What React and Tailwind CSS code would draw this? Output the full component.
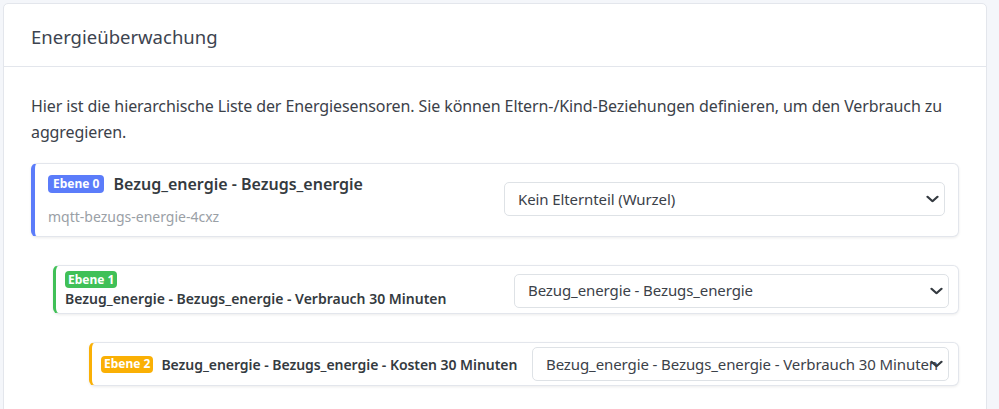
import React from "react";

const sensors = [
  {
    level: 0,
    name: "Bezug_energie - Bezugs_energie",
    id: "mqtt-bezugs-energie-4cxz",
    parent: "Kein Elternteil (Wurzel)",
  },
  {
    level: 1,
    name: "Bezug_energie - Bezugs_energie - Verbrauch 30 Minuten",
    parent: "Bezug_energie - Bezugs_energie",
  },
  {
    level: 2,
    name: "Bezug_energie - Bezugs_energie - Kosten 30 Minuten",
    parent: "Bezug_energie - Bezugs_energie - Verbrauch 30 Minuten",
  },
];

function Chevron() {
  return (
    <svg
      viewBox="0 0 13 7"
      className="absolute right-[5px] top-1/2 -translate-y-1/2 h-[7px] w-[13px] text-[#343a40]"
      fill="none"
      stroke="currentColor"
      strokeWidth="2.2"
      strokeLinecap="round"
      strokeLinejoin="round"
    >
      <path d="M1.5 1.2l5 4.6 5-4.6" />
    </svg>
  );
}

function FakeSelect({ value }) {
  return (
    <div className="relative h-[34px] bg-white border border-[#dee2e6] rounded-[5px] pl-[13px] flex items-center overflow-hidden whitespace-nowrap text-[15px] tracking-[-0.1px] text-[#3b4149]">
      {value}
      <Chevron />
    </div>
  );
}

function RootCard({ s }) {
  return (
    <div className="grid grid-cols-2 gap-[15px] items-center bg-white border border-[#e3e6ec] border-l-[4px] border-l-[#5b7cfa] rounded-[6px] shadow-[0_1px_3px_rgba(0,0,0,0.08)] pl-[13px] pr-[13px] pt-[8px] pb-[10px]">
      <div>
        <div className="flex items-center gap-[9px] h-[24px]">
          <span className="bg-[#5b7cfa] text-white text-[12px] font-bold rounded-[4px] px-[5px] h-[18px] flex items-center">
            Ebene {s.level}
          </span>
          <span className="text-[16px] font-semibold text-[#343a40]">{s.name}</span>
        </div>
        <div className="mt-[11px] text-[14px] leading-[19px] text-[#9aa0a6]">{s.id}</div>
      </div>
      <FakeSelect value={s.parent} />
    </div>
  );
}

function ChildCard({ s, color, indent, stacked }) {
  const badge = (
    <span
      className={`${color.bg} text-white text-[12px] font-bold rounded-[4px] px-[3px] h-[17px] flex items-center shrink-0`}
    >
      Ebene {s.level}
    </span>
  );

  return (
    <div
      className={`${indent} grid grid-cols-2 gap-[14px] items-center bg-white border border-[#e3e6ec] border-l-[3px] ${color.border} rounded-[6px] shadow-[0_1px_3px_rgba(0,0,0,0.08)] pl-[9px] pr-[9px] ${stacked ? "pt-[5px] pb-[3px]" : "py-[4px]"}`}
    >
      {stacked ? (
        <div>
          <div className="flex h-[17px]">{badge}</div>
          <div className="text-[14px] font-semibold text-[#343a40] leading-[22px]">{s.name}</div>
        </div>
      ) : (
        <div className="flex items-center gap-[8px]">
          {badge}
          <span className="text-[14px] font-semibold text-[#343a40] whitespace-nowrap tracking-[-0.05px]">
            {s.name}
          </span>
        </div>
      )}
      <FakeSelect value={s.parent} />
    </div>
  );
}

export default function App() {
  return (
    <div
      className="min-h-[409px] w-[999px] bg-[#f4f6fa] pt-[3px] pl-[3px] pr-[12px]"
      style={{ fontFamily: '"Noto Sans", "Open Sans", sans-serif' }}
    >
      <div className="bg-white border border-[#e3e6ec] rounded-[5px] min-h-[420px]">
        {/* Header */}
        <div className="h-[63px] border-b border-[#e3e6ec] px-[27px] pt-[3px] flex items-center">
          <h5 className="text-[18.5px] text-[#3d4450]">Energieüberwachung</h5>
        </div>

        {/* Body */}
        <div className="px-[27px] pt-[26px]">
          <p className="text-[16px] leading-[26px] tracking-[-0.1px] text-[#3b4149] mb-[18px]">
            Hier ist die hierarchische Liste der Energiesensoren. Sie können Eltern-/Kind-Beziehungen
            definieren, um den Verbrauch zu aggregieren.
          </p>

          <div className="flex flex-col gap-[28px]">
            <RootCard s={sensors[0]} />
            <ChildCard
              s={sensors[1]}
              indent="ml-[22px]"
              stacked
              color={{ border: "border-l-[#40c057]", bg: "bg-[#40c057]" }}
            />
            <ChildCard
              s={sensors[2]}
              indent="ml-[58px]"
              color={{ border: "border-l-[#fab005]", bg: "bg-[#fab005]" }}
            />
          </div>
        </div>
      </div>
    </div>
  );
}
